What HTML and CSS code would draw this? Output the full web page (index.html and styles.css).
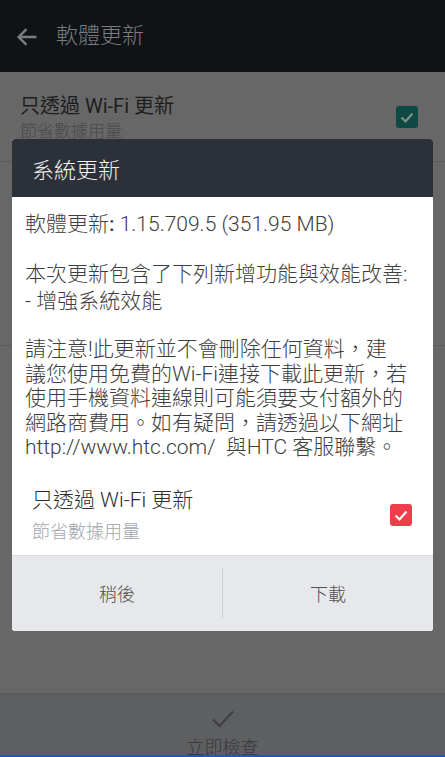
FILE: index.html
```html
<!DOCTYPE html>
<html lang="zh-Hant">
<head>
<meta charset="utf-8">
<title>軟體更新</title>
<link rel="stylesheet" href="styles.css">
</head>
<body>
<div class="screen">
  <header class="appbar">
    <svg class="back" width="20" height="18" viewBox="0 0 20 18" aria-hidden="true">
      <path d="M19.5 9H1.8M9.5 1.2L1.7 9l7.8 7.8" fill="none" stroke="#7a7c7f" stroke-width="2.4"/>
    </svg>
    <span class="appbar-title">軟體更新</span>
  </header>
  <div class="list">
    <div class="row row-wifi">
      <div class="row-text">
        <div class="row-title">只透過 Wi-Fi 更新</div>
        <div class="row-sub">節省數據用量</div>
      </div>
      <span class="box box-green">
        <svg width="22" height="22" viewBox="0 0 22 22" aria-hidden="true"><path d="M5.5 11.5l4 4 7-8" fill="none" stroke="#7f8f8c" stroke-width="2.2"/></svg>
      </span>
    </div>
    <div class="row row-blank"></div>
  </div>
  <div class="fill"></div>
  <footer class="bottombar">
    <svg class="check-now" width="22" height="18" viewBox="0 0 22 18" aria-hidden="true"><path d="M1 9.5l6.5 6.5L21 1.5" fill="none" stroke="#3c3d40" stroke-width="2"/></svg>
    <span class="bottom-label">立即檢查</span>
  </footer>
  <div class="navline"></div>
</div>

<div class="dialog">
  <div class="dialog-header">系統更新</div>
  <div class="dialog-body">
    <p class="version">軟體更新<b>:</b> 1.15.709.5 (351.95 MB)</p>
    <p class="para para-list">本次更新包含了下列新增功能與效能改善:<br>- 增強系統效能</p>
    <p class="para para-note">請注意!此更新並不會刪除任何資料，建<br>議您使用免費的Wi-Fi連接下載此更新，若<br>使用手機資料連線則可能須要支付額外的<br>網路商費用。如有疑問，請透過以下網址<br>http://www.htc.com/&nbsp; 與HTC 客服聯繫。</p>
  </div>
  <div class="dialog-option">
    <div class="option-text">
      <div class="option-title">只透過 Wi-Fi 更新</div>
      <div class="option-sub">節省數據用量</div>
    </div>
    <span class="box box-red">
      <svg width="22" height="22" viewBox="0 0 22 22" aria-hidden="true"><path d="M5.5 11.5l4 4 7-8" fill="none" stroke="#ffffff" stroke-width="2.2"/></svg>
    </span>
  </div>
  <div class="dialog-actions">
    <button class="action">稍後</button>
    <span class="action-divider"></span>
    <button class="action">下載</button>
  </div>
</div>
</body>
</html>
```

FILE: styles.css
```css
* { box-sizing: border-box; }
html, body {
  margin: 0;
  padding: 0;
}
body {
  width: 445px;
  height: 757px;
  overflow: hidden;
  position: relative;
  background: #676767;
  font-family: Roboto, "Noto Sans CJK TC", sans-serif;
}
.screen {
  width: 445px;
  height: 757px;
  display: flex;
  flex-direction: column;
}
.appbar {
  height: 72px;
  flex: none;
  background: #0f1316;
  display: flex;
  align-items: center;
  padding-left: 17px;
}
.back { flex: none; margin-top: 2px; }
.appbar-title {
  margin-left: 19px;
  font-size: 22px;
  font-weight: 300;
  color: #7a7c7f;
  line-height: 26px;
}
.list { flex: none; }
.row {
  border-bottom: 1px solid #5b5b5b;
}
.row-wifi {
  height: 90px;
  display: flex;
  align-items: center;
  padding: 0 27px 0 20px;
}
.row-text { flex: 1; padding-top: 3px; }
.row-title {
  font-size: 20px;
  line-height: 24px;
  color: #1e1e1e;
}
.row-sub {
  font-size: 17px;
  line-height: 22px;
  margin-top: 2px;
  color: #4a4a4a;
  font-weight: 300;
}
.box {
  flex: none;
  width: 22px;
  height: 22px;
  border-radius: 3px;
  display: block;
}
.box svg { display: block; }
.box-green { background: #0e4a43; }
.box-red { background: #ef3d4a; }
.row-blank { height: 184px; }
.fill { flex: 1; }
.bottombar {
  flex: none;
  height: 62px;
  overflow: hidden;
  background: #5e5f61;
  border-top: 1px solid #585858;
  display: flex;
  flex-direction: column;
  align-items: center;
  padding-top: 16px;
}
.check-now { display: block; flex: none; }
.bottom-label {
  margin-top: 9px;
  font-size: 18px;
  line-height: 22px;
  font-weight: 300;
  color: #38393b;
}
.navline {
  flex: none;
  height: 2px;
  background: #2457b4;
}

.dialog {
  position: absolute;
  left: 12px;
  top: 139px;
  width: 421px;
  border-radius: 3px;
  overflow: hidden;
  background: #ffffff;
}
.dialog-header {
  height: 58px;
  background: #2c3039;
  color: #f2f2f2;
  font-size: 22px;
  font-weight: 300;
  display: flex;
  align-items: center;
  padding-left: 20px;
}
.dialog-body {
  padding: 15px 13px 0;
  color: #3e3e3e;
  font-size: 21px;
  font-weight: 300;
  white-space: nowrap;
}
.dialog-body p { margin: 0; }
.version { line-height: 25px; }
.version b { font-weight: 500; }
.para-list { margin-top: 24px !important; line-height: 27px; }
.para-note { margin-top: 22px !important; line-height: 24.5px; }
.dialog-option {
  display: flex;
  align-items: center;
  padding: 28px 21px 12px 20px;
  border-bottom: 1px solid #d8dadd;
}
.option-text { flex: 1; }
.option-title {
  font-size: 21px;
  line-height: 25px;
  color: #2e2e2e;
  font-weight: 300;
}
.option-sub {
  margin-top: 8px;
  font-size: 18px;
  line-height: 22px;
  color: #a2a6ad;
  font-weight: 300;
}
.dialog-actions {
  height: 75px;
  background: #e6e8eb;
  display: flex;
  align-items: center;
}
.action {
  flex: 1;
  height: 100%;
  border: 0;
  background: transparent;
  font-family: Roboto, "Noto Sans CJK TC", sans-serif;
  font-size: 18px;
  font-weight: 300;
  color: #505050;
  padding: 0;
}
.action-divider {
  flex: none;
  width: 1px;
  height: 50px;
  background: #cfd1d4;
}
```
